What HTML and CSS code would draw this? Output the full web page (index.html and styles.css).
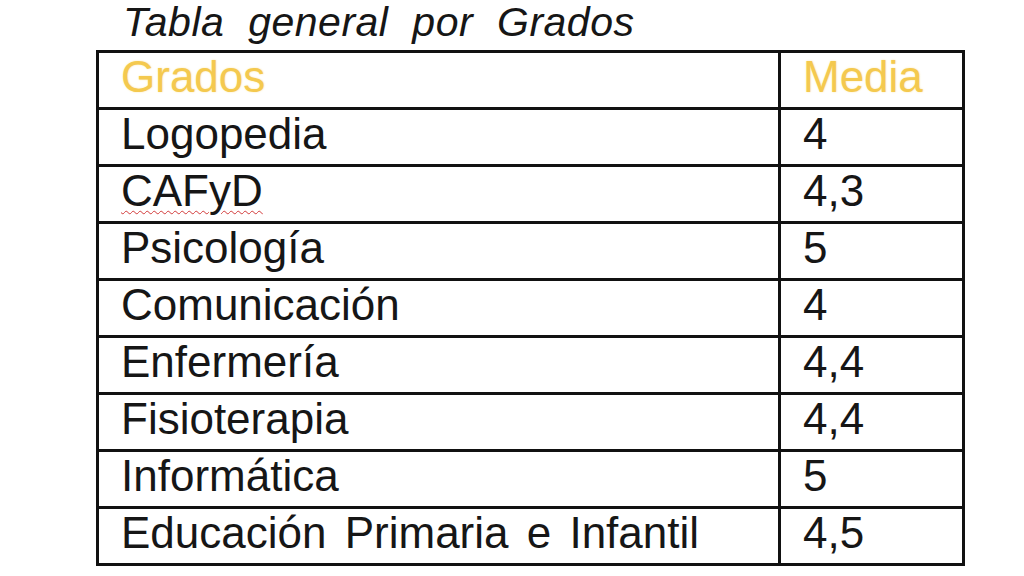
FILE: index.html
```html
<!DOCTYPE html>
<html lang="es">
<head>
<meta charset="utf-8">
<title>Tabla general por Grados</title>
<link rel="stylesheet" href="styles.css">
</head>
<body>
<div class="page">
  <div class="title">Tabla general por Grados</div>
  <table class="grades">
    <colgroup><col class="col-name"><col class="col-mean"></colgroup>
    <thead>
      <tr><th>Grados</th><th>Media</th></tr>
    </thead>
    <tbody>
      <tr><td>Logopedia</td><td>4</td></tr>
      <tr><td><span class="spell">CAFyD</span></td><td>4,3</td></tr>
      <tr><td>Psicología</td><td>5</td></tr>
      <tr><td>Comunicación</td><td>4</td></tr>
      <tr><td>Enfermería</td><td>4,4</td></tr>
      <tr><td>Fisioterapia</td><td>4,4</td></tr>
      <tr><td>Informática</td><td>5</td></tr>
      <tr><td>Educación Primaria e Infantil</td><td>4,5</td></tr>
    </tbody>
  </table>
</div>
</body>
</html>
```

FILE: styles.css
```css
html, body {
  margin: 0;
  padding: 0;
  background: #ffffff;
}
body {
  font-family: "Liberation Sans", Arial, sans-serif;
  color: #161616;
}
.page {
  width: 1024px;
  height: 576px;
  padding-left: 96px;
  box-sizing: border-box;
}
.title {
  height: 50px;
  padding-left: 27px;
  font-style: italic;
  font-size: 41px;
  line-height: 44px;
  word-spacing: 12px;
  letter-spacing: 0.5px;
  color: #161616;
}
.grades {
  border-collapse: collapse;
  width: 866px;
  table-layout: fixed;
}
.col-name { width: 682px; }
.col-mean { width: 184px; }
.grades th,
.grades td {
  border: 3px solid #111111;
  height: 54px;
  padding: 0 0 0 22px;
  vertical-align: top;
  text-align: left;
  font-weight: normal;
  font-size: 44px;
  line-height: 48px;
  white-space: nowrap;
}
.grades th {
  color: #f4c94f;
  text-shadow: 0 0 2px rgba(250, 215, 110, 0.6);
}
.grades td {
  word-spacing: 6px;
}
.spell {
  text-decoration: underline wavy #d23a3a;
  text-decoration-thickness: 1px;
  text-underline-offset: 4px;
}
```
